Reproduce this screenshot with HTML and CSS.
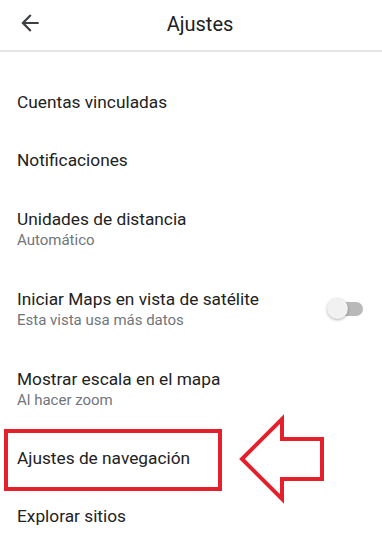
FILE: index.html
```html
<!DOCTYPE html>
<html lang="es">
<head>
<meta charset="utf-8">
<title>Ajustes</title>
<link rel="stylesheet" href="styles.css">
</head>
<body>
<div class="screen">
  <header class="appbar">
    <button class="back" aria-label="Atrás">
      <svg viewBox="0 0 24 24" width="26" height="26"><path d="M20 11H7.83l5.59-5.59L12 4l-8 8 8 8 1.41-1.41L7.83 13H20v-2z" fill="#3c4043"/></svg>
    </button>
    <h1 class="title">Ajustes</h1>
    <span class="spacer"></span>
  </header>
  <main class="list">
    <div class="partial"></div>
    <div class="row"><div class="texts"><div class="primary">Cuentas vinculadas</div></div></div>
    <div class="row"><div class="texts"><div class="primary">Notificaciones</div></div></div>
    <div class="row two"><div class="texts"><div class="primary">Unidades de distancia</div><div class="secondary">Automático</div></div></div>
    <div class="row two">
      <div class="texts"><div class="primary">Iniciar Maps en vista de satélite</div><div class="secondary">Esta vista usa más datos</div></div>
      <div class="switch"><span class="track"></span><span class="thumb"></span></div>
    </div>
    <div class="row two"><div class="texts"><div class="primary">Mostrar escala en el mapa</div><div class="secondary">Al hacer zoom</div></div></div>
    <div class="row"><div class="texts"><div class="primary">Ajustes de navegación</div></div></div>
    <div class="row"><div class="texts"><div class="primary">Explorar sitios</div></div></div>
  </main>
  <svg class="annot" width="382" height="548" viewBox="0 0 382 548">
    <rect x="6" y="431" width="214" height="58" fill="none" stroke="#e3202b" stroke-width="4"/>
    <polygon points="242,459 282,419 282,439 322,439 322,479 282,479 282,499" fill="none" stroke="#e3202b" stroke-width="4" stroke-linejoin="miter"/>
  </svg>
</div>
</body>
</html>
```
FILE: styles.css
```css
* { box-sizing: border-box; }
html, body { margin: 0; padding: 0; background: #fff; }
body { font-family: Roboto, "Noto Sans", sans-serif; color: #202124; }
.screen { position: relative; width: 382px; height: 548px; overflow: hidden; }
.appbar {
  height: 52px;
  display: flex;
  align-items: center;
  padding: 0 0 0 17px;
  border-bottom: 2px solid #e6e6e6;
}
.back { background: none; border: 0; padding: 0; width: 26px; height: 26px; display: flex; margin-top: -4px; }
.title {
  flex: 1;
  margin: -3px 0 0 0;
  text-align: center;
  font-size: 20px;
  font-weight: 400;
  color: #202124;
  padding-right: 8px;
}
.spacer { width: 17px; }
.list { display: flex; flex-direction: column; }
.partial { height: 21px; }
.row {
  height: 58px;
  display: flex;
  align-items: center;
  padding: 0 17px;
}
.row.two { height: 80px; }
.texts { flex: 1; display: flex; flex-direction: column; }
.primary { font-size: 17.3px; line-height: 22px; color: #222; }
.secondary { font-size: 15px; line-height: 21px; color: #70757a; }
.switch { position: relative; width: 36px; height: 22px; margin-right: 2px; }
.track {
  position: absolute; left: 6px; top: 4px; width: 30px; height: 14px;
  border-radius: 7px; background: #b9b9b9;
}
.thumb {
  position: absolute; left: 0; top: 0; width: 21px; height: 21px; border-radius: 50%;
  background: #f1f1f1; box-shadow: 0 1px 3px rgba(0,0,0,0.3);
}
.annot { position: absolute; left: 0; top: 0; pointer-events: none; }
```
